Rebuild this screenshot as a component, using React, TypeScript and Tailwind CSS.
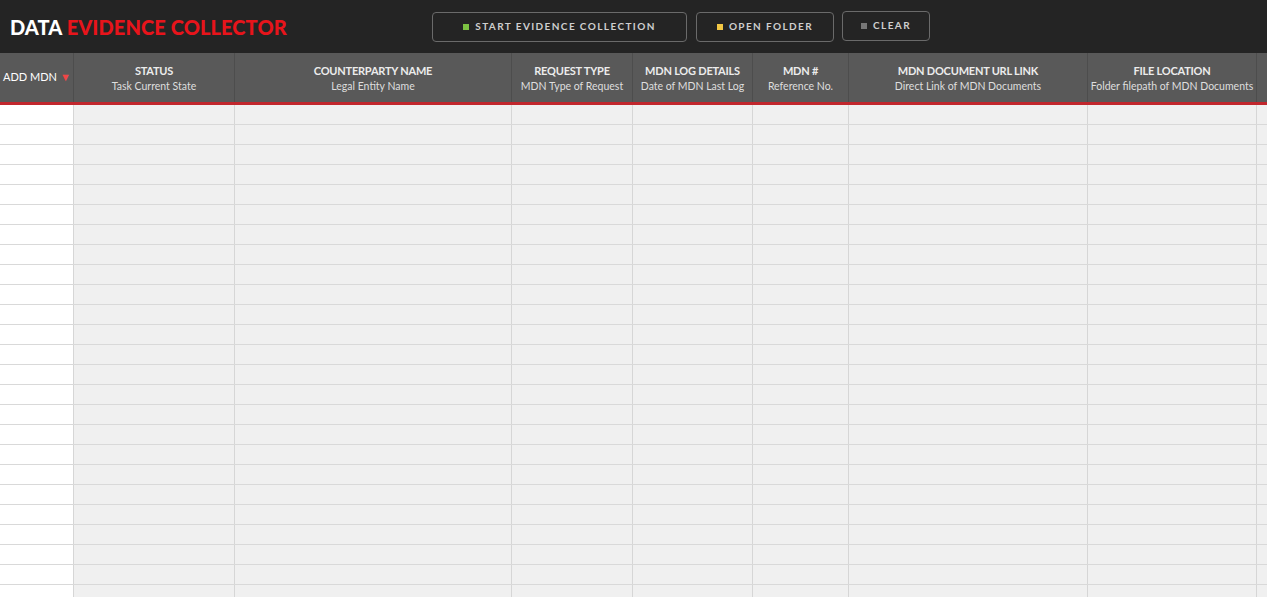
const columns = [
  { title: "STATUS", sub: "Task Current State", w: "w-[161px]" },
  { title: "COUNTERPARTY NAME", sub: "Legal Entity Name", w: "w-[277px]" },
  { title: "REQUEST TYPE", sub: "MDN Type of Request", w: "w-[121px]" },
  { title: "MDN LOG DETAILS", sub: "Date of MDN Last Log", w: "w-[120px]" },
  { title: "MDN #", sub: "Reference No.", w: "w-[96px]" },
  { title: "MDN DOCUMENT URL LINK", sub: "Direct Link of MDN Documents", w: "w-[239px]" },
  { title: "FILE LOCATION", sub: "Folder filepath of MDN Documents", w: "w-[169px]" },
];

const rows = Array.from({ length: 25 }, (_, i) => i);

function ActionButton({
  label,
  dot,
  className,
}: {
  label: string;
  dot: string;
  className: string;
}) {
  return (
    <button
      type="button"
      className={`flex h-[30px] items-center justify-center gap-[6px] rounded-[4px] border border-[#6a6a6a] text-[10px] font-bold tracking-[0.14em] text-[#cfcfcf] ${className}`}
    >
      <span className={`h-[6px] w-[6px] ${dot}`} />
      {label}
    </button>
  );
}

export default function App() {
  return (
    <div className="h-[597px] w-full overflow-hidden bg-[#f0f0f0] font-['Lato',sans-serif]">
      <header className="flex h-[53px] items-center bg-[#242424]">
        <h1 className="ml-[10px] w-[422px] text-[20px] font-black tracking-[0.005em] text-white">
          DATA <span className="text-[#e8141b]">EVIDENCE COLLECTOR</span>
        </h1>
        <div className="flex items-center">
          <ActionButton label="START EVIDENCE COLLECTION" dot="bg-[#7cc142]" className="w-[255px]" />
          <ActionButton label="OPEN FOLDER" dot="bg-[#f2c744]" className="ml-[9px] w-[138px]" />
          <ActionButton label="CLEAR" dot="bg-[#777]" className="ml-[8px] -mt-[2px] w-[88px]" />
        </div>
      </header>

      <div className="flex h-[52px] border-b-[3px] border-[#c1272d] bg-[#595959]">
        <div className="flex w-[74px] shrink-0 items-center border-r border-[#4d4d4d] pl-[3px] text-[11px] text-white">
          ADD MDN
          <span className="ml-[3px] text-[11px] text-[#f04646]">▼</span>
        </div>
        {columns.map((c) => (
          <div
            key={c.title}
            className={`flex ${c.w} shrink-0 flex-col items-center justify-center whitespace-nowrap border-r border-[#4d4d4d] pt-[1px] leading-[15px]`}
          >
            <span className="text-[11px] font-bold tracking-[-0.02em] text-[#ececec]">{c.title}</span>
            <span className="mt-[1px] text-[10.5px] text-[#dedede]">{c.sub}</span>
          </div>
        ))}
        <div className="flex-1" />
      </div>

      <div>
        {rows.map((r) => (
          <div key={r} className="flex h-[20px] border-b border-[#d9d9d9]">
            <div className="w-[74px] shrink-0 border-r border-[#d6d6d6] bg-white" />
            {columns.map((c) => (
              <div key={c.title} className={`${c.w} shrink-0 border-r border-[#d6d6d6]`} />
            ))}
            <div className="flex-1" />
          </div>
        ))}
      </div>
    </div>
  );
}
